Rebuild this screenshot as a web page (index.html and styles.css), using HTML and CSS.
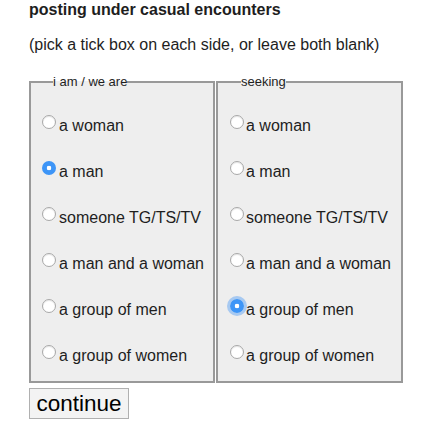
FILE: index.html
```html
<!DOCTYPE html>
<html>
<head>
<meta charset="utf-8">
<link rel="stylesheet" href="styles.css">
</head>
<body>
<div class="page">
  <h1 class="title">posting under casual encounters</h1>
  <p class="hint">(pick a tick box on each side, or leave both blank)</p>
  <form class="form">
    <div class="cols">
      <fieldset class="col col-left">
        <legend class="legend">i am / we are</legend>
        <label class="opt"><input class="radio" type="radio" name="iam"><span>a woman</span></label>
        <label class="opt"><input class="radio" type="radio" name="iam" checked><span>a man</span></label>
        <label class="opt"><input class="radio" type="radio" name="iam"><span>someone TG/TS/TV</span></label>
        <label class="opt"><input class="radio" type="radio" name="iam"><span>a man and a woman</span></label>
        <label class="opt"><input class="radio" type="radio" name="iam"><span>a group of men</span></label>
        <label class="opt"><input class="radio" type="radio" name="iam"><span>a group of women</span></label>
      </fieldset>
      <fieldset class="col col-right">
        <legend class="legend">seeking</legend>
        <label class="opt"><input class="radio" type="radio" name="seek"><span>a woman</span></label>
        <label class="opt"><input class="radio" type="radio" name="seek"><span>a man</span></label>
        <label class="opt"><input class="radio" type="radio" name="seek"><span>someone TG/TS/TV</span></label>
        <label class="opt"><input class="radio" type="radio" name="seek"><span>a man and a woman</span></label>
        <label class="opt"><input class="radio ring" type="radio" name="seek" checked><span>a group of men</span></label>
        <label class="opt"><input class="radio" type="radio" name="seek"><span>a group of women</span></label>
      </fieldset>
    </div>
    <button class="btn" type="button">continue</button>
  </form>
</div>
</body>
</html>
```

FILE: styles.css
```css
html, body {
  margin: 0;
  padding: 0;
  background: #ffffff;
}

body {
  font-family: "Liberation Sans", Arial, sans-serif;
  color: #1e1e1e;
}

.page {
  padding: 1px 0 0 29px;
}

.title {
  margin: 0;
  font-size: 16px;
  line-height: 18px;
  font-weight: bold;
  color: #1e1e1e;
}

.hint {
  margin: 17px 0 0 0;
  font-size: 16px;
  line-height: 18px;
}

.form {
  margin-top: 20px;
}

.cols {
  display: grid;
  grid-template-columns: 186px 187px;
  column-gap: 1px;
}

.col {
  margin: 0;
  min-width: 0;
  border: 2px solid #999999;
  background: #eeeeee;
  padding: 28px 0 16px 11px;
  display: flex;
  flex-direction: column;
  gap: 28px;
}

.col-right {
  padding-left: 12px;
}

.legend {
  margin-left: 11px;
  padding: 0;
  font-size: 13px;
  line-height: 15px;
  color: #1e1e1e;
}

.opt {
  display: flex;
  align-items: flex-start;
  gap: 3px;
  font-size: 16px;
  line-height: 18px;
  white-space: nowrap;
}

.col-right .opt {
  gap: 2px;
}

.radio {
  -webkit-appearance: none;
  appearance: none;
  margin: -2px 0 0 0;
  width: 14px;
  height: 14px;
  flex: none;
  border-radius: 50%;
  border: 1px solid #a8a8a8;
  background: #ffffff;
  box-shadow: inset 0 1px 1px rgba(0, 0, 0, 0.1);
}

.radio:checked {
  border: none;
  background: radial-gradient(circle, #ffffff 0, #ffffff 2px, #3d95f7 2.6px, #3d95f7 100%);
  box-shadow: none;
}

.radio.ring {
  box-shadow: 0 0 0 3px rgba(80, 155, 245, 0.45);
}

.btn {
  display: block;
  margin-top: 5px;
  width: 100px;
  height: 31px;
  padding: 0;
  font-family: "Liberation Sans", Arial, sans-serif;
  font-size: 22.5px;
  color: #000000;
  background: #f3f3f3;
  border: 1px solid #b0b0b0;
  border-radius: 0;
}
```
